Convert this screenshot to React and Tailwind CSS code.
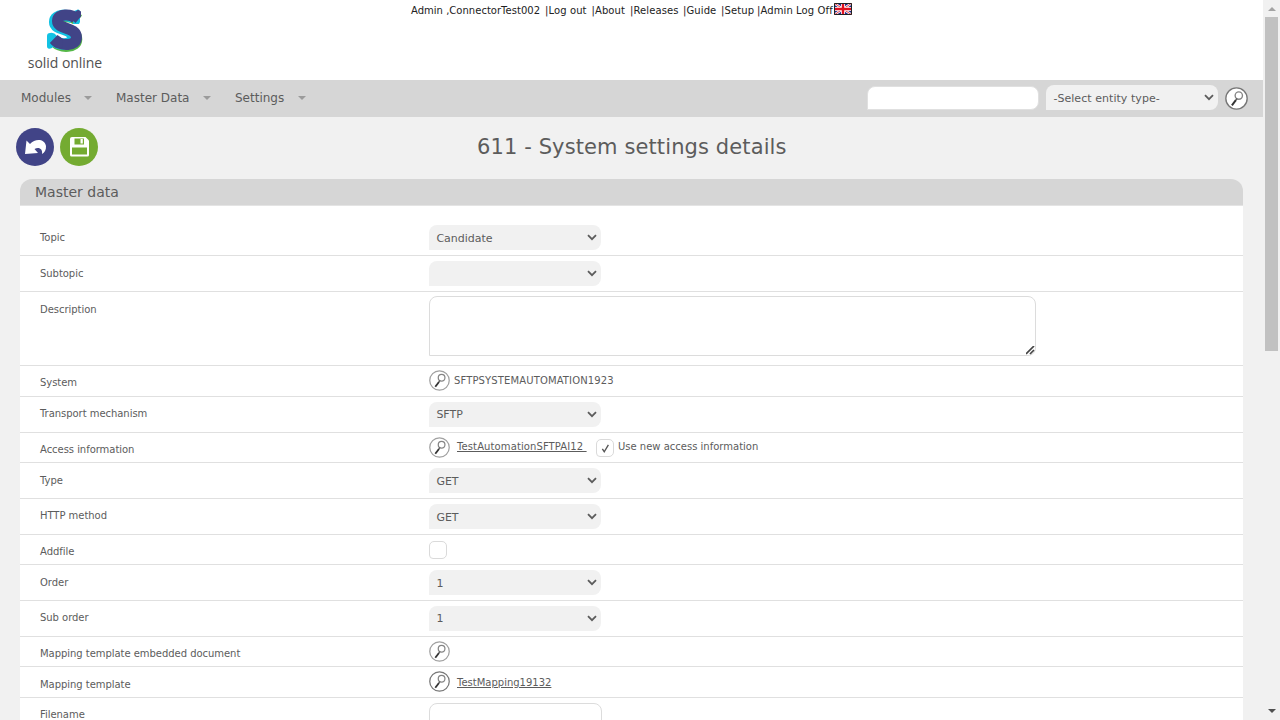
import React from "react";

function Magnifier({ className = "", stroke = "#a0a0a0" }) {
  return (
    <svg viewBox="0 0 22 22" className={"block shrink-0 " + className} fill="none">
      <circle cx="11" cy="11" r="10.2" fill="#fff" stroke={stroke} strokeWidth="1.3" />
      <circle cx="13.2" cy="8.2" r="3.5" stroke="#858585" strokeWidth="1.3" />
      <path d="M11.6 11 L10 13" stroke="#555" strokeWidth="1.2" />
      <path d="M10.4 12.6 L6.6 17.6" stroke="#333" strokeWidth="1.9" />
    </svg>
  );
}

function Chevron() {
  return (
    <svg viewBox="0 0 10 7" className="h-[7px] w-[10px] shrink-0" fill="none">
      <path d="M1 1.2 L5 5.2 L9 1.2" stroke="#5c5c5c" strokeWidth="1.8" />
    </svg>
  );
}

function Select({ children = "" }) {
  return (
    <div className="flex h-[25px] w-[172px] items-center justify-between rounded-lg rounded-bl-none bg-[#f1f1f1] pr-1 pl-[7px] text-[11px] leading-[25px]">
      <span className="pt-px">{children}</span>
      <Chevron />
    </div>
  );
}

function Checkbox({ checked }) {
  return (
    <div className="flex h-[18px] w-[18px] items-center justify-center rounded-[5px] rounded-bl-sm border border-[#dadada] bg-white">
      {checked && (
        <svg viewBox="0 0 10 10" className="h-[9px] w-[9px]" fill="none">
          <path d="M1.5 5.5 L3.6 8.6 L8.2 1" stroke="#555" strokeWidth="1.5" />
        </svg>
      )}
    </div>
  );
}

function Row({ label, height, labelTop, top, children }) {
  return (
    <div className={"flex items-start border-b border-[#e0e0e0] pl-5 " + height}>
      <div className={"w-[389px] shrink-0 leading-[14px] tracking-[-0.04px] " + labelTop}>{label}</div>
      <div className={"flex " + top}>{children}</div>
    </div>
  );
}

function SelectRow({ label, height = "h-9", labelTop, top = "mt-[5px]", children }) {
  return (
    <Row label={label} height={height} labelTop={labelTop} top={top}>
      <div className="pl-[0.4px] pt-[0.4px]"><Select>{children}</Select></div>
    </Row>
  );
}

function MenuItem({ children, className }) {
  return (
    <div className={"flex items-center justify-between " + className}>
      <span>{children}</span>
      <svg viewBox="0 0 8 4" className="h-1 w-2">
        <path d="M0 0H8L4 4Z" fill="#9b9b9b" />
      </svg>
    </div>
  );
}

function Logo() {
  return (
    <div className="ml-[27px] w-[76px] pt-2">
      <svg viewBox="0 0 40 46" className="mx-auto block h-[46px] w-10" fill="none">
        <path d="M31 11 C26 6 12 6 12 13 C12 22 31 19 31 30 C31 39 15 39 9 33" stroke="#55b848" strokeWidth="11" transform="translate(0.8 1.2)" />
        <path d="M30 10.5 C25 6 10.5 6 10.5 14 C10.5 23 29 19 29 30 C29 37 14 38 10 32" stroke="#12c2e3" strokeWidth="11.5" transform="translate(-0.8 0)" />
        <path d="M29 3 L33 1.5 Q36 2 35 6 L35 14 L34 16 L28 16Z" fill="#12c2e3" />
        <path d="M34 6 L37 7 L35.5 10Z" fill="#55b848" />
        <path d="M5 25 Q9 24 12 28 L13 32 L7 40 Q2 42 2 38 V28 Q2 25 5 25Z" fill="#12c2e3" />
        <path d="M31 10.5 C26.5 6 12.5 5 12.5 13 C12.5 22 31.5 18.5 31.5 29.5 C31.5 38.5 16 38 10 32.5" stroke="#414487" strokeWidth="11" />
        <path d="M24 9 L33 1.8 L36 3.5 V8.5 L30.5 15Z M4.8 35 L12.5 27 L18 31 L17 40 L10 39.5Z" fill="#414487" />
      </svg>
      <div className="h-[20px] text-center font-['Open_Sans',sans-serif] text-[14px] leading-[18px] tracking-[-0.05px] whitespace-nowrap text-[#505050]">solid online</div>
    </div>
  );
}

function Flag() {
  return (
    <svg viewBox="0 0 18 12" className="h-3 w-[18px]">
      <path d="M0 0H18V12H0Z" fill="#1c2c90" />
      <path d="M0 0L18 12M18 0L0 12" stroke="#fff" strokeWidth="2.4" />
      <path d="M0 0L18 12M18 0L0 12" stroke="#e0222f" strokeWidth="0.9" />
      <path d="M9 0V12M0 6H18" stroke="#fff" strokeWidth="4" />
      <path d="M9 0V12M0 6H18" stroke="#e0101f" strokeWidth="2.4" />
      <path d="M.5 .5H17.5V11.5H.5Z" stroke="#222" fill="none" />
    </svg>
  );
}

export default function App() {
  return (
    <div className="flex h-[720px] w-[1280px] overflow-hidden bg-[#f1f1f1] font-['DejaVu_Sans',sans-serif] text-[10px] text-[#5c5c5c]">
      <div className="w-[1263px] shrink-0">
        <header className="flex h-20 items-start bg-white">
          <Logo />
          <nav className="ml-[308px] flex pt-[3px] text-[10px] leading-[15px] tracking-[0.1px] whitespace-pre text-[#222]">
            <span className="w-[134px] tracking-[0.02px]">Admin ,ConnectorTest002 </span>
            <span className="w-[46.5px]">|Log out </span>
            <span className="w-[38.5px]">|About </span>
            <span className="w-[53px]">|Releases </span>
            <span className="w-[38px]">|Guide </span>
            <span className="w-[36px]">|Setup</span>
            <span className="w-[77px]">|Admin Log Off</span>
            <Flag />
          </nav>
        </header>

        <div className="flex h-[37px] items-start bg-[#d6d6d6] pl-[21px] text-[12px] leading-[36px]">
          <MenuItem className="w-[71px]">Modules</MenuItem>
          <MenuItem className="ml-6 w-[95px]">Master Data</MenuItem>
          <MenuItem className="ml-6 w-[71px]">Settings</MenuItem>
          <div className="mt-1.5 ml-[561px] h-6 w-[172px] rounded-lg rounded-bl-none border border-[#e0e0e0] bg-white" />
          <div className="mt-[5px] ml-[7.4px] tracking-[0.05px]"><Select>-Select entity type-</Select></div>
          <Magnifier className="mt-[7px] ml-[6.6px] h-[23px] w-[23px]" stroke="#777" />
        </div>

        <div className="flex h-[62px] pl-4">
          <svg viewBox="0 0 38 38" className="mt-[11px] h-[38px] w-[38px]">
            <circle cx="19" cy="19" r="19" fill="#414487" />
            <path d="M9 26 L10.5 12.5 L14 16 C19 10.5 28.5 10.5 30 18 C30.3 22 28.5 24.5 26 26 C27 20.5 22.5 18.5 18.5 21 L22 25Z" fill="#fff" />
          </svg>
          <svg viewBox="0 0 38 38" className="mt-[11px] ml-1.5 h-[38px] w-[38px]" fill="none">
            <circle cx="19" cy="19" r="19" fill="#74ab31" />
            <path d="M12 9H25.5L29 12.5V27Q29 28.5 27.5 28.5H11.5Q10 28.5 10 27V11Q10 9 12 9Z" fill="#fff" />
            <path d="M14.5 10.5H24V16.5H14.5ZM12 19.5H27V26.5H12Z" fill="#74ab31" />
            <path d="M20.5 11H22.8V15.5H20.5Z" fill="#fff" />
          </svg>
          <h1 className="mt-[15px] ml-[379px] text-[21px] leading-[30px] tracking-[0.11px] whitespace-nowrap">611 - System settings details</h1>
        </div>

        <main className="mx-5 w-[1223px] bg-white">
          <div className="bg-[#f1f1f1]">
            <h2 className="h-[27px] rounded-t-xl border-b border-[#e4e4e4] bg-[#d6d6d6] pl-[15px] text-[14px] leading-[26px]">Master data</h2>
          </div>
          <SelectRow label="Topic" height="h-[50px]" labelTop="mt-[25px]" top="mt-[19px]">Candidate</SelectRow>
          <SelectRow label="Subtopic" labelTop="mt-[11px]" />
          <Row label="Description" height="h-[74px]" labelTop="mt-[11px]" top="mt-1">
            <div className="flex h-[60px] w-[607px] items-end justify-end rounded-lg rounded-bl-none border border-[#dcdcdc]">
              <svg viewBox="0 0 9 9" className="h-[9px] w-[9px]"><path d="M0 8L8 0M4 8L8 4" stroke="#444" strokeWidth="1.7" /></svg>
            </div>
          </Row>
          <Row label="System" height="h-[31px]" labelTop="mt-[10px]" top="mt-1">
            <Magnifier className="h-[21px] w-[21px]" />
            <span className="ml-1 leading-[21px] tracking-[0.13px]">SFTPSYSTEMAUTOMATION1923</span>
          </Row>
          <SelectRow label="Transport mechanism" labelTop="mt-[10px]" top="mt-[4.5px]">SFTP</SelectRow>
          <Row label="Access information" height="h-[30px]" labelTop="mt-[10px]" top="mt-1">
            <Magnifier className="h-[21px] w-[21px]" />
            <span className="ml-[7px] w-[139px] leading-[20px] tracking-[0.11px] whitespace-pre underline">TestAutomationSFTPAI12 </span>
            <div className="mt-0.5"><Checkbox checked /></div>
            <span className="ml-1 leading-[20px]">Use new access information</span>
          </Row>
          <SelectRow label="Type" labelTop="mt-[11px]">GET</SelectRow>
          <SelectRow label="HTTP method" labelTop="mt-[10px]">GET</SelectRow>
          <Row label="Addfile" height="h-[30px]" labelTop="mt-[10px]" top="mt-1.5"><Checkbox /></Row>
          <SelectRow label="Order" labelTop="mt-[11px]">1</SelectRow>
          <SelectRow label="Sub order" labelTop="mt-[10px]" top="mt-[4.5px]">1</SelectRow>
          <Row label="Mapping template embedded document" height="h-[30px]" labelTop="mt-[10px]" top="mt-1">
            <Magnifier className="h-[21px] w-[21px]" />
          </Row>
          <Row label="Mapping template" height="h-[31px]" labelTop="mt-[11px]" top="mt-1">
            <Magnifier className="h-[21px] w-[21px]" stroke="#777" />
            <span className="ml-[7px] leading-[23px] underline">TestMapping19132</span>
          </Row>
          <Row label="Filename" height="h-9" labelTop="mt-[10px]" top="mt-[5px]">
            <div className="h-[25px] w-[173px] rounded-lg rounded-bl-none border border-[#dcdcdc]" />
          </Row>
        </main>
      </div>

      <div className="flex w-[17px] shrink-0 flex-col items-center justify-between bg-[#f1f1f1]">
        <div>
          <svg viewBox="0 0 17 17" className="h-[17px] w-[17px]"><path d="M5 11H13L9 7Z" fill="#a3a3a3" /></svg>
          <div className="mx-auto h-[334px] w-[13px] bg-[#c1c1c1]" />
        </div>
        <svg viewBox="0 0 17 17" className="h-[17px] w-[17px]"><path d="M5 6H13L9 10Z" fill="#505050" /></svg>
      </div>
    </div>
  );
}
